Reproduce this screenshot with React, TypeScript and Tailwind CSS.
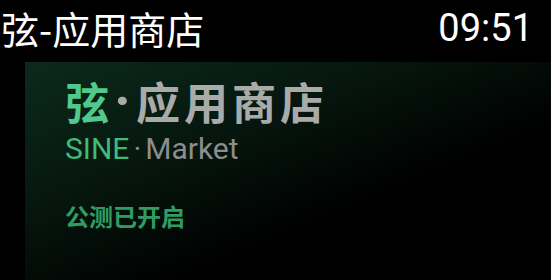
export default function App() {
  const cjk = { fontFamily: '"Noto Sans CJK SC", "Noto Sans", sans-serif' };
  const latin = { fontFamily: 'Roboto, "Noto Sans", sans-serif' };
  return (
    <div className="w-[551px] h-[280px] bg-black overflow-hidden flex flex-col">
      <div className="h-[56px] flex items-center justify-between pr-[18px] shrink-0">
        <div className="text-white text-[38px] leading-none pl-[1px]" style={cjk}>
          弦-应用商店
        </div>
        <div className="text-white text-[38px] leading-none" style={latin}>
          09:51
        </div>
      </div>
      <div className="mt-[6px] ml-[25px] flex-1 bg-[linear-gradient(to_bottom_right,#0b2a1c_0%,#06160e_35%,#000000_65%)] pl-[40px] pt-[17px] flex flex-col">
        <div className="h-[44px] text-[44px] leading-none font-bold flex items-center" style={cjk}>
          <span className="text-[#52c88c]">弦</span>
          <span className="text-[#a9aba9] text-[56px] leading-[44px] mx-[5px]" style={latin}>·</span>
          <span className="text-[#a9aba9] tracking-[4px]">应用商店</span>
        </div>
        <div className="mt-[11px] text-[30px] leading-none flex items-center" style={latin}>
          <span className="text-[#3fba78]">SINE</span>
          <span className="text-[#8c8e8c] mx-[4px]">·</span>
          <span className="text-[#8c8e8c]">Market</span>
        </div>
        <div className="mt-[40px] text-[24px] leading-none font-bold text-[#2f9c64]" style={cjk}>
          公测已开启
        </div>
      </div>
    </div>
  );
}
